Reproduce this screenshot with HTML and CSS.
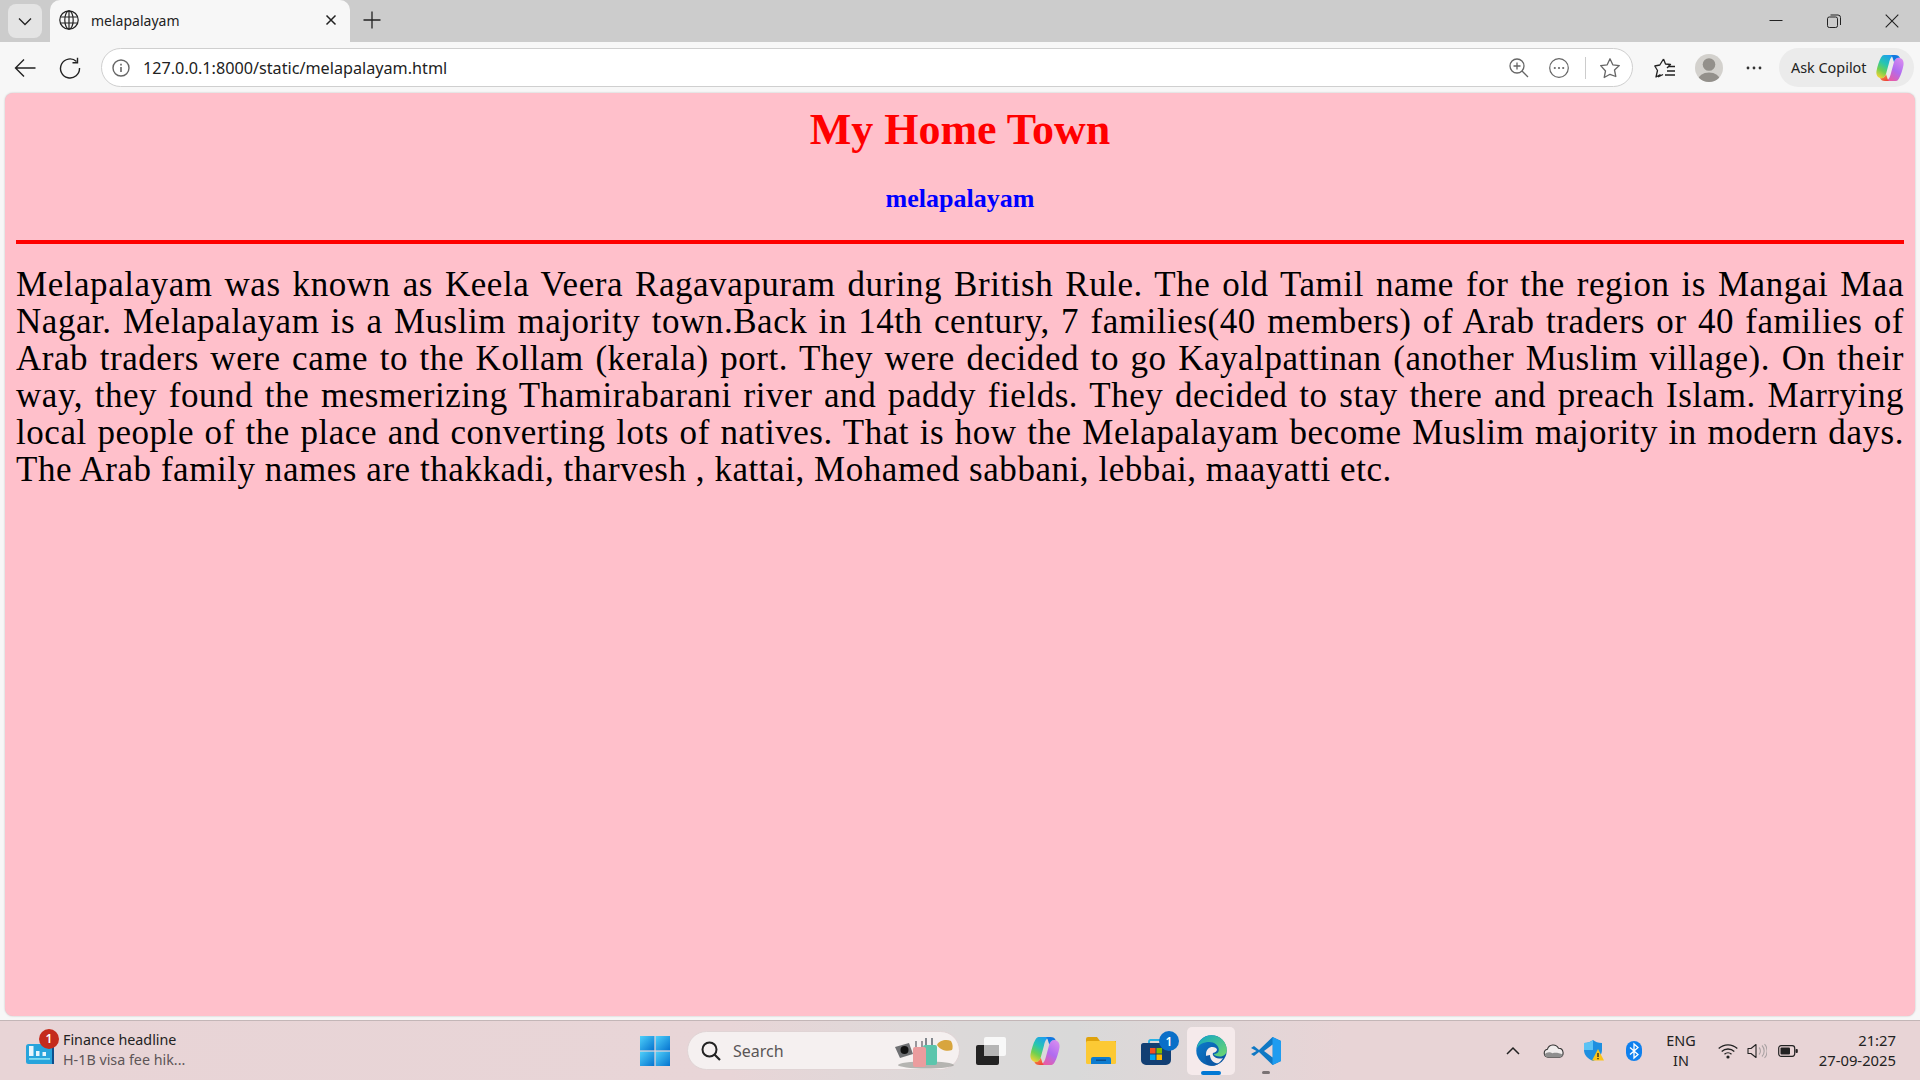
FILE: index.html
```html
<!DOCTYPE html>
<html lang="en">
<head>
<meta charset="utf-8">
<title>melapalayam</title>
<link rel="stylesheet" href="styles.css">
</head>
<body>
<svg class="defs" width="0" height="0" aria-hidden="true">
  <defs>
    <linearGradient id="cpA" x1=".7" y1="0" x2=".2" y2="1"><stop offset="0" stop-color="#1c9df0"/><stop offset=".4" stop-color="#27c6b0"/><stop offset=".7" stop-color="#6fd050"/><stop offset="1" stop-color="#f2d235"/></linearGradient>
    <linearGradient id="cpB" x1=".8" y1="0" x2=".2" y2="1"><stop offset="0" stop-color="#d78cf0"/><stop offset=".5" stop-color="#b06cf0"/><stop offset="1" stop-color="#f05a9a"/></linearGradient>
    <linearGradient id="cpC" x1="0" y1="0" x2=".6" y2="1"><stop offset="0" stop-color="#f7a83a"/><stop offset="1" stop-color="#ee4a3a"/></linearGradient>
    <linearGradient id="edA" x1="0" y1="0" x2="1" y2="1"><stop offset="0" stop-color="#0fa5c8"/><stop offset="1" stop-color="#6fd86c"/></linearGradient>
    <linearGradient id="edB" x1="0" y1="0" x2="1" y2="1"><stop offset="0" stop-color="#0c7fd0"/><stop offset="1" stop-color="#0a4f9a"/></linearGradient>
    <linearGradient id="winG" x1="0" y1="0" x2="1" y2="1"><stop offset="0" stop-color="#4fd0fa"/><stop offset="1" stop-color="#0573cf"/></linearGradient>
    <g id="copilot">
      <path d="M8 1H19C15 2 14 5 13 9L10 20C9 23 7 25 4 24C1 23 0 20 .5 17C1.500 12 3 7 5 3.500C6 1.800 7 1 8 1z" fill="url(#cpA)"/>
      <path d="M20 27H9C13 26 14 23 15 19L18 8C19 5 21 3 24 4C27 5 28 8 27.500 11C26.500 16 25 21 23 24.500C22 26.200 21 27 20 27z" fill="url(#cpB)"/>
      <path d="M15 1h4c3 0 4 1 5 3-3-1-5 1-6 4L17 5C16.500 3 16 2 15 1z" fill="#1278e0"/>
      <path d="M13 27H9c-3 0-4-1-5-3 3 1 5-1 6-4l1 3c.5 2 1 3 2 4z" fill="url(#cpC)"/>
    </g>
  </defs>
</svg>

<header class="tabstrip">
  <div class="tablist-btn">
    <svg width="16" height="16" viewBox="0 0 16 16"><path d="M2 5.500l6 6 6-6" class="st" stroke-width="1.300"/></svg>
  </div>
  <div class="tab">
    <svg class="tab-globe" width="20" height="20" viewBox="0 0 20 20"><g class="st" stroke-width="1.200"><circle cx="10" cy="10" r="9.200"/><ellipse cx="10" cy="10" rx="4.200" ry="9.200"/><path d="M10 .8v18.400M1.400 7h17.200M1.400 13h17.200"/></g></svg>
    <span class="tab-title">melapalayam</span>
    <svg class="tab-x" width="12" height="12" viewBox="0 0 12 12"><path d="M1.500 1.500l9 9M10.500 1.500l-9 9" class="st" stroke-width="1.500"/></svg>
  </div>
  <svg class="newtab" width="18" height="18" viewBox="0 0 18 18"><path d="M9 .5v17M.5 9h17" class="st" stroke-width="1.300"/></svg>
  <div class="winctl">
    <svg width="14" height="14" viewBox="0 0 14 14"><path d="M.5 6.500h13" class="st" stroke-width="1"/></svg>
    <svg width="14" height="14" viewBox="0 0 14 14"><g class="st" stroke-width="1"><rect x=".5" y="3" width="10" height="10.500" rx="1.800"/><path d="M3.500 1h7.500a2.500 2.500 0 0 1 2.500 2.500V11"/></g></svg>
    <svg width="14" height="14" viewBox="0 0 14 14"><path d="M.7.700l12.600 12.600M13.300.700L.7 13.300" class="st" stroke-width="1.100"/></svg>
  </div>
</header>

<nav class="toolbar">
  <svg class="tb-back" width="22" height="20" viewBox="0 0 22 20"><path d="M1.500 10h20M10 1.500L1.500 10l8.500 8.500" class="st" stroke-width="1.400"/></svg>
  <svg class="tb-reload" width="22" height="22" viewBox="0 0 22 22"><path d="M17.500 4.500A9.500 9.500 0 1 0 20.500 11" class="st" stroke-width="1.400"/><path d="M18.500 .8v5h-5" class="st" stroke-width="1.400"/></svg>
  <div class="omnibox">
    <svg class="om-info" width="18" height="18" viewBox="0 0 18 18"><circle cx="9" cy="9" r="8" class="st-g" stroke-width="1.400"/><path d="M9 8v5M9 4.800v1.600" class="st-g" stroke-width="1.600"/></svg>
    <span class="url">127.0.0.1:8000/static/melapalayam.html</span>
    <svg class="om-zoom" width="20" height="20" viewBox="0 0 20 20"><g class="st-g" stroke-width="1.300"><circle cx="8" cy="8" r="7"/><path d="M13 13l6 6M4.500 8h7M8 4.500v7"/></g></svg>
    <svg class="om-more" width="20" height="20" viewBox="0 0 20 20"><circle cx="10" cy="10" r="9.300" class="st-g" stroke-width="1.200"/><circle cx="5.800" cy="10" r="1.100" fill="#666"/><circle cx="10" cy="10" r="1.100" fill="#666"/><circle cx="14.200" cy="10" r="1.100" fill="#666"/></svg>
    <span class="om-sep"></span>
    <svg class="om-star" width="22" height="22" viewBox="0 0 22 22"><path d="M11 1.800l2.800 6 6.500.8-4.800 4.400 1.300 6.500L11 17.300 5.200 20.500l1.300-6.500L1.700 8.600l6.500-.8z" class="st-g" stroke-width="1.300" stroke-linejoin="round"/></svg>
  </div>
  <svg class="tb-fav" width="22" height="22" viewBox="0 0 22 22"><path d="M9.500 2l2 5 5 .5-3.500 3.500M6.500 17.500L2 20l1.500-6.500L.8 9l5-1L9.500 2M4 20l5-2.500" class="st" stroke-width="1.300" stroke-linejoin="round"/><path d="M14 9.500h7M13 14h8M11 18h10" class="st" stroke-width="1.300"/></svg>
  <svg class="tb-avatar" width="28" height="28" viewBox="0 0 28 28"><defs><clipPath id="av"><circle cx="14" cy="14" r="14"/></clipPath></defs><circle cx="14" cy="14" r="14" fill="#d3d1cd"/><g clip-path="url(#av)" fill="#93908b"><circle cx="14" cy="10.500" r="6.300"/><ellipse cx="14" cy="26" rx="11" ry="7.500"/></g></svg>
  <svg class="tb-dots" width="16" height="4" viewBox="0 0 16 4"><circle cx="2" cy="2" r="1.400" fill="#333"/><circle cx="8" cy="2" r="1.400" fill="#333"/><circle cx="14" cy="2" r="1.400" fill="#333"/></svg>
  <div class="askcopilot">
    <span>Ask Copilot</span>
    <svg width="28" height="28" viewBox="0 0 28 28"><use href="#copilot"/></svg>
  </div>
</nav>

<main class="page">
  <h1 class="page-title">My Home Town</h1>
  <h3 class="page-sub">melapalayam</h3>
  <hr class="rule">
  <p class="story">
    <span class="ln">Melapalayam was known as Keela Veera Ragavapuram during British Rule. The old Tamil name for the region is Mangai Maa</span>
    <span class="ln">Nagar. Melapalayam is a Muslim majority town.Back in 14th century, 7 families(40 members) of Arab traders or 40 families of</span>
    <span class="ln">Arab traders were came to the Kollam (kerala) port. They were decided to go Kayalpattinan (another Muslim village). On their</span>
    <span class="ln">way, they found the mesmerizing Thamirabarani river and paddy fields. They decided to stay there and preach Islam. Marrying</span>
    <span class="ln">local people of the place and converting lots of natives. That is how the Melapalayam become Muslim majority in modern days.</span>
    <span class="ln-last">The Arab family names are thakkadi, tharvesh , kattai, Mohamed sabbani, lebbai, maayatti etc.</span>
  </p>
</main>

<footer class="taskbar">
  <div class="widget">
    <div class="widget-icon">
      <svg width="30" height="22" viewBox="0 0 30 22"><rect x="0" y="2" width="28" height="20" rx="2.500" fill="#27a4dc"/><rect x="26" y="2" width="2" height="20" fill="#0f4e8c"/><g fill="#e8f6fc"><rect x="3" y="4" width="4.500" height="10"/><rect x="10" y="9" width="3.500" height="5"/><rect x="16.500" y="10" width="3.500" height="4"/></g><rect x="3" y="16" width="21" height="1.800" fill="#7fdcf2"/></svg>
      <span class="badge badge-red">1</span>
    </div>
    <div class="widget-text">
      <div class="widget-head">Finance headline</div>
      <div class="widget-sub">H-1B visa fee hik...</div>
    </div>
  </div>

  <div class="tb-center">
    <svg class="ic-start" width="30" height="30" viewBox="0 0 30 30"><rect x="0" y="0" width="14.400" height="14.400" fill="url(#winG)"/><rect x="15.600" y="0" width="14.400" height="14.400" fill="url(#winG)"/><rect x="0" y="15.600" width="14.400" height="14.400" fill="url(#winG)"/><rect x="15.600" y="15.600" width="14.400" height="14.400" fill="url(#winG)"/></svg>
    <div class="search">
      <svg width="22" height="22" viewBox="0 0 22 22"><circle cx="9.500" cy="9.500" r="7" stroke="#222" stroke-width="2" fill="none"/><path d="M14.500 14.500l5.500 5.500" stroke="#222" stroke-width="2.200" fill="none"/></svg>
      <span>Search</span>
      <svg class="search-art" width="60" height="32" viewBox="0 0 60 32">
        <ellipse cx="32" cy="28" rx="28" ry="3.500" fill="#9a9a96" opacity=".7"/>
        <path d="M1 10l14-4 4 11-13 4z" fill="#6f7073"/><circle cx="10.500" cy="13" r="4" fill="#111"/>
        <path d="M32 1v8M38 1v8" stroke="#44505a" stroke-width="1.300" fill="none"/>
        <rect x="29" y="8" width="14" height="20" rx="2" fill="#5bc5ac"/>
        <path d="M22 4v6M28 4v6" stroke="#5c5c64" stroke-width="1.200" fill="none"/>
        <rect x="19" y="10" width="13" height="20" rx="2" fill="#eb9c9e"/>
        <path d="M43 8c2-5 10-6 14-4 2 3 2 7 1 9-5 2-12 0-15-5z" fill="#d8a53e"/>
      </svg>
    </div>
    <svg class="ic-taskview" width="30" height="28" viewBox="0 0 30 28"><rect x="0" y="8" width="23" height="20" rx="2" fill="#232323"/><rect x="8" y="0" width="22" height="19" rx="2" fill="#fff" opacity=".8"/><rect x="8" y="8" width="15" height="11" fill="#b5b5b5"/></svg>
    <svg class="ic-copilot" width="30" height="30" viewBox="0 0 28 28"><use href="#copilot"/></svg>
    <svg class="ic-folder" width="30" height="27" viewBox="0 0 30 27"><path d="M0 2a2 2 0 0 1 2-2h9l3 4h16v5H0z" fill="#dfa20c"/><rect x="0" y="4" width="30" height="23" rx="1.500" fill="#fcc934"/><path d="M5 27v-5a2 2 0 0 1 2-2h16a2 2 0 0 1 2 2v5z" fill="#0c7cd0"/><rect x="10" y="22.500" width="10" height="1.500" fill="#0a4f8e"/></svg>
    <div class="store">
      <svg width="30" height="26" viewBox="0 0 30 26"><path d="M8 5V2.500a1.500 1.500 0 0 1 1.500-1.500h11A1.500 1.500 0 0 1 22 2.500V5" fill="none" stroke="#27b0e4" stroke-width="1.800"/><path d="M0 6.500A2.500 2.500 0 0 1 2.500 4h25A2.500 2.500 0 0 1 30 6.500V21a5 5 0 0 1-5 5H5a5 5 0 0 1-5-5z" fill="#123f73"/><rect x="9" y="9" width="5.500" height="5.500" fill="#f25022"/><rect x="15.500" y="9" width="5.500" height="5.500" fill="#7fba00"/><rect x="9" y="15.500" width="5.500" height="5.500" fill="#00a4ef"/><rect x="15.500" y="15.500" width="5.500" height="5.500" fill="#ffb900"/></svg>
      <span class="badge badge-blue">1</span>
    </div>
    <div class="edge-slot">
      <svg width="31" height="31" viewBox="0 0 31 31"><circle cx="15.500" cy="15.500" r="15.200" fill="url(#edB)"/><path d="M.6 14C2 6 8 .3 15.500.3 24 .3 30.800 7 30.800 15c0 4-3 6.500-7 6.500-3 0-5.500-1-6-2.500 3 0 5-1.500 5-4 0-4.500-4.500-8-9.500-8C7.500 7 2.500 9.500.6 14z" fill="url(#edA)"/><path d="M10 19.500C10 14.500 13 12 16.500 12c2.500 0 4 1 4.500 2.500 0 2-2 3-4 3.500-1 2 1 5 6 5.500 1.500.2 3 0 4-.5C24.500 27.500 20 30 16 30c-4 0-6-5-6-10.500z" fill="#f4eaeb"/><path d="M14 20c0 5 4 9 9 8.500-2 1.500-4.500 2.300-7.500 2.300C11 30.800 9 25 9.500 21z" fill="#0b5aa8"/></svg>
      <span class="edge-ind"></span>
    </div>
    <div class="vscode-slot">
      <svg width="30" height="30" viewBox="0 0 30 30"><path d="M21.500 1L30 5v20l-8.500 4L8 16l-5 4-3-2 5.500-3L0 12l3-2 5 4z" fill="#0f78c4"/><path d="M21.500 1L30 5v20l-8.500 4z" fill="#1f9cf0"/><path d="M21.500 8.500L13 15l8.500 6.500z" fill="#e9d5d7"/></svg>
      <span class="vs-ind"></span>
    </div>
  </div>

  <div class="tray">
    <svg class="tr-chev" width="14" height="10" viewBox="0 0 14 10"><path d="M1 8l6-6 6 6" class="st" stroke-width="1.500"/></svg>
    <svg class="tr-cloud" width="21" height="14" viewBox="0 0 21 14"><path d="M5 13.200a4 4 0 0 1-.6-7.900A6 6 0 0 1 15.500 4.300a4.500 4.500 0 0 1 1 8.900z" fill="#f0ecec" stroke="#333" stroke-width="1.100"/><path d="M5 13.200c-2 0-3-1-3.500-2.500 2-2.500 5-3 8-1.500 3-1 6-.5 10.500 1.500-.5 1.500-2 2.500-3.500 2.500z" fill="#8e8e8e"/></svg>
    <svg class="tr-shield" width="20" height="21" viewBox="0 0 20 21"><path d="M9 0c2.500 2 5 2.800 9 3v7c0 5-3.500 8.500-9 11C3.500 18.500 0 15 0 10V3c4-.2 6.500-1 9-3z" fill="#1e8fe0"/><path d="M9 0v10H0V3c4-.2 6.500-1 9-3z" fill="#5cc3f5"/><path d="M14 9l6 11.500H8z" fill="#fcc419"/><path d="M14 13v4M14 18v1.200" stroke="#222" stroke-width="1.300"/></svg>
    <svg class="tr-bt" width="16" height="20" viewBox="0 0 16 20"><rect width="16" height="20" rx="8" fill="#0f80ee"/><path d="M4 6.500l8 7-4 3.500V3l4 3.500-8 7" fill="none" stroke="#fff" stroke-width="1.300"/></svg>
    <div class="lang"><div>ENG</div><div>IN</div></div>
    <svg class="tr-wifi" width="20" height="16" viewBox="0 0 20 16"><g class="st" stroke-width="1.300"><path d="M.7 5.500a13.500 13.500 0 0 1 18.600 0"/><path d="M3.700 8.500a9.200 9.200 0 0 1 12.600 0"/><path d="M6.500 11.300a5 5 0 0 1 7 0"/></g><circle cx="10" cy="14" r="1.600" fill="#222"/></svg>
    <svg class="tr-vol" width="20" height="16" viewBox="0 0 20 16"><path d="M1 5.500h3L9 1.500v13l-5-4H1z" class="st" stroke-width="1.100" stroke-linejoin="round"/><path d="M12 4.500a5 5 0 0 1 0 7M15 2.500a8 8 0 0 1 0 11M17.500 1a10.500 10.500 0 0 1 0 14" fill="none" stroke="#a9a2a3" stroke-width="1.100"/></svg>
    <svg class="tr-batt" width="20" height="12" viewBox="0 0 20 12"><rect x=".7" y=".7" width="16" height="10.600" rx="2.500" fill="none" stroke="#222" stroke-width="1.200"/><rect x="2.500" y="2.500" width="9.500" height="7" rx="1" fill="#222"/><rect x="17.500" y="4" width="2.300" height="4" rx="1" fill="#222"/></svg>
    <div class="clock"><div>21:27</div><div>27-09-2025</div></div>
  </div>
</footer>
</body>
</html>
```

FILE: styles.css
```css
* { box-sizing: border-box; }
html, body { margin: 0; padding: 0; }
body {
  width: 1920px;
  height: 1080px;
  display: flex;
  flex-direction: column;
  overflow: hidden;
  background: #f7f7f7;
  font-family: "Noto Sans", "Open Sans", sans-serif;
  color: #1a1a1a;
}
.defs { position: absolute; }
svg { display: block; flex: none; }
.st { fill: none; stroke: #222; }
.st-g { fill: none; stroke: #666; }

/* tab strip */
.tabstrip {
  height: 42px;
  flex: none;
  background: #cccccc;
  display: flex;
  align-items: flex-start;
  padding-left: 8px;
}
.tablist-btn {
  width: 34px;
  height: 34px;
  margin-top: 4px;
  border-radius: 8px;
  background: #e4e4e4;
  display: flex;
  align-items: center;
  justify-content: center;
}
.tab {
  width: 300px;
  height: 42px;
  margin-left: 8px;
  background: #f7f7f7;
  border-radius: 10px 10px 0 0;
  display: flex;
  align-items: center;
  padding: 0 13px 2px 9px;
}
.tab-globe { margin-right: 12px; }
.tab-title { flex: 1; font-size: 14px; color: #222; }
.newtab { margin: 11px 0 0 13px; }
.winctl {
  margin-left: auto;
  margin-top: 14px;
  padding-right: 21px;
  display: flex;
  gap: 44px;
}

/* toolbar */
.toolbar {
  height: 51px;
  flex: none;
  background: #f7f7f7;
  display: flex;
  align-items: center;
}
.tb-back { margin-left: 14px; }
.tb-reload { margin-left: 23px; }
.omnibox {
  width: 1532px;
  height: 39px;
  flex: none;
  margin-left: 20px;
  border: 1px solid #cfcfcf;
  border-radius: 20px;
  background: #fff;
  display: flex;
  align-items: center;
  padding-left: 10px;
}
.om-info { margin-right: 13px; }
.url { font-size: 16.200px; color: #222; flex: 1; padding-top: 1px; }
.om-zoom { margin-right: 20px; }
.om-more { margin-right: 16px; }
.om-sep { width: 1px; height: 22px; background: #ccc; margin-right: 13px; }
.om-star { margin-right: 11px; }
.tb-fav { margin-left: 21px; }
.tb-avatar { margin-left: 19px; }
.tb-dots { margin-left: 23px; }
.askcopilot {
  width: 135px;
  height: 39px;
  flex: none;
  margin-left: 17px;
  border-radius: 20px;
  background: #ebebeb;
  display: flex;
  align-items: center;
  justify-content: space-between;
  padding: 0 10px 0 12px;
  font-size: 14.400px;
  color: #222;
}

/* page */
.page {
  flex: none;
  height: 923px;
  margin: 0 5px;
  padding: 0 11px;
  background: #ffc0cb;
  border-radius: 8px;
  box-shadow: 0 0 2px rgba(0,0,0,.25);
  font-family: "Liberation Serif", serif;
}
.page-title {
  margin: 0;
  padding-top: 12px;
  font-size: 44px;
  line-height: 50px;
  text-align: center;
  color: #f00;
}
.page-sub {
  margin: 0;
  padding-top: 29px;
  font-size: 26px;
  line-height: 30px;
  text-align: center;
  color: #00f;
}
.rule {
  margin: 26px 0 0;
  border: 0;
  height: 4px;
  background: #f00;
}
.story {
  margin: 22px 0 0;
  font-size: 35px;
  line-height: 37px;
  color: #000;
}
.ln { display: block; text-align: justify; text-align-last: justify; white-space: nowrap; letter-spacing: .55px; }
.ln-last { display: block; white-space: nowrap; letter-spacing: .55px; }

/* taskbar */
.taskbar {
  flex: none;
  height: 60px;
  margin-top: 4px;
  border-top: 1px solid #c3b6b7;
  background: linear-gradient(90deg, #e8d4d6 0%, #e8d5d7 38%, #dcd9d9 50%, #d9d9d9 56%, #e8d4d6 70%, #e8d4d6 100%);
  display: flex;
  align-items: center;
  position: relative;
}
.widget { width: 640px; flex: none; display: flex; align-items: center; padding-left: 26px; }
.widget-icon { position: relative; width: 30px; height: 22px; margin-top: 4px; }
.badge {
  position: absolute;
  width: 20px;
  height: 20px;
  border-radius: 50%;
  color: #fff;
  font-size: 12px;
  font-weight: 600;
  display: flex;
  align-items: center;
  justify-content: center;
}
.badge-red { background: #c42b1c; left: 13px; top: -13px; }
.badge-blue { background: #0a6fc8; right: -8px; top: -8px; }
.widget-text { margin-left: 7px; font-size: 14.300px; line-height: 20px; margin-top: -1px; }
.widget-head { color: #222; }
.widget-sub { color: #5d5556; }

.tb-center { display: flex; align-items: center; width: 640px; flex: none; }
.search {
  width: 273px;
  height: 39px;
  flex: none;
  margin-left: 17px;
  border-radius: 20px;
  background: #f5f0f0;
  border: 1px solid #e0d4d5;
  display: flex;
  align-items: center;
  padding-left: 12px;
  font-size: 16px;
  color: #5a5556;
  position: relative;
}
.search span { margin-left: 11px; }
.search-art { position: absolute; right: 5px; top: 5px; }
.ic-taskview { margin-left: 16px; }
.ic-copilot { margin-left: 24px; }
.ic-folder { margin-left: 26px; }
.store { position: relative; margin-left: 25px; margin-top: 3px; flex: none; }
.edge-slot {
  width: 48px;
  height: 48px;
  flex: none;
  margin-left: 16px;
  border-radius: 5px;
  background: #f5eaeb;
  display: flex;
  align-items: center;
  justify-content: center;
  position: relative;
}
.edge-ind {
  position: absolute;
  left: 14px;
  bottom: 0;
  width: 20px;
  height: 4px;
  border-radius: 2px;
  background: #0078d4;
}
.vscode-slot { position: relative; margin-left: 16px; flex: none; }
.vs-ind {
  position: absolute;
  left: 11px;
  bottom: -8px;
  width: 8px;
  height: 3px;
  border-radius: 2px;
  background: #7a7273;
}
.tray { flex: 1; display: flex; align-items: center; font-size: 14.400px; color: #222; line-height: 20px; text-align: center; }
.tr-chev { margin-left: 226px; }
.tr-cloud { margin-left: 23px; }
.tr-shield { margin-left: 20px; }
.tr-bt { margin-left: 22px; }
.lang { width: 40px; margin-left: 19px; }
.tr-wifi { margin-left: 17px; }
.tr-vol { margin-left: 9px; }
.tr-batt { margin-left: 11px; }
.clock { margin-left: auto; margin-top: -1px; padding-right: 24px; text-align: right; font-size: 14.800px; }
```
